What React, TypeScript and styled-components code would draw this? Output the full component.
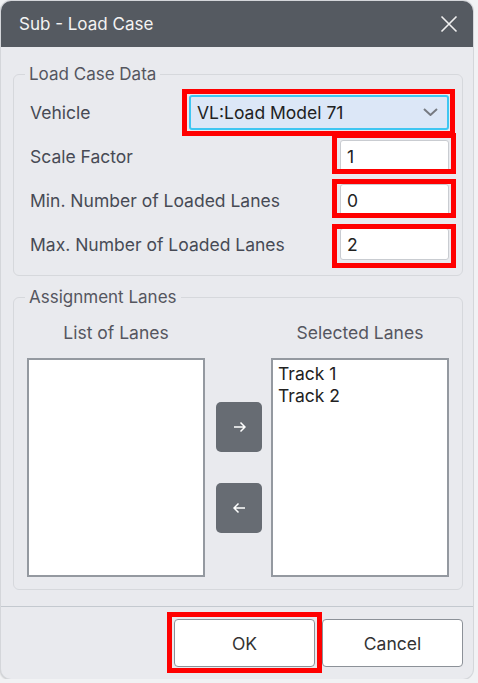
import { Fragment } from 'react';
import styled, { createGlobalStyle } from 'styled-components';

const GlobalStyle = createGlobalStyle`
  html, body {
    margin: 0;
    padding: 0;
    background: #f1f2f4;
  }
  body {
    font-family: Inter, "Noto Sans", sans-serif;
  }
`;

const Dialog = styled.div`
  width: 472px;
  margin: 1px 0 0 1px;
  display: flex;
  flex-direction: column;
  background: #e9eaee;
  border-radius: 10px;
  overflow: hidden;
  box-shadow: 0 0 0 1px #d4d6da, -1px 1px 2px rgba(0, 0, 0, 0.22);
`;

const TitleBar = styled.div`
  height: 46px;
  display: flex;
  align-items: center;
  justify-content: space-between;
  padding: 0 11px 0 18px;
  background: #555a61;
  color: #f3f3f3;
`;

const Title = styled.span`
  font-size: 17px;
`;

const CloseButton = styled.button`
  display: flex;
  align-items: center;
  justify-content: center;
  width: 26px;
  height: 26px;
  padding: 0;
  border: none;
  background: transparent;
  color: #f0f0f0;
  cursor: pointer;
`;

const Body = styled.div`
  padding: 16px 10px 16px 12px;
  display: flex;
  flex-direction: column;
  gap: 10px;
`;

const Group = styled.fieldset<{ $pad: string }>`
  margin: 0;
  min-width: 0;
  border: 1px solid #d6d8dc;
  border-radius: 6px;
  padding: ${({ $pad }) => $pad};
`;

const Legend = styled.legend<{ $shift: number }>`
  margin-left: ${({ $shift }) => $shift}px;
  padding: 0 4px;
  font-size: 17px;
  line-height: 22px;
  color: #55565f;
`;

const FormGrid = styled.div`
  display: grid;
  grid-template-columns: minmax(0, 1fr) auto;
  grid-auto-rows: 44px;
  align-items: center;
`;

const Label = styled.span`
  font-size: 17.5px;
  white-space: nowrap;
  color: #474a55;
`;

const Marked = styled.span<{ $inset: string }>`
  position: relative;
  display: inline-flex;
  justify-self: end;

  &::after {
    content: '';
    position: absolute;
    inset: ${({ $inset }) => $inset};
    border: 5px solid #ff0000;
    pointer-events: none;
  }
`;

const SelectBox = styled.div`
  box-sizing: border-box;
  width: 260px;
  height: 35px;
  display: flex;
  align-items: center;
  justify-content: space-between;
  padding: 0 9px 0 6px;
  background: #dce7f7;
  border: 2px solid #3ec6f2;
  border-radius: 3px;
  font-size: 17.5px;
  color: #222;
`;

const TextInput = styled.input`
  box-sizing: border-box;
  width: 109px;
  height: 32px;
  padding: 0 6px;
  background: #fff;
  border: 1.5px solid #c9ccd1;
  border-radius: 3px;
  font-family: inherit;
  font-size: 17.5px;
  color: #222;
  outline: none;
`;

const LanesGrid = styled.div`
  display: grid;
  grid-template-columns: 178px 1fr 178px;
  grid-template-rows: 22px 219px;
  row-gap: 14px;
`;

const ColumnTitle = styled.div`
  text-align: center;
  font-size: 17.5px;
  line-height: 22px;
  color: #55565f;
`;

const ListBox = styled.div`
  box-sizing: border-box;
  background: #fff;
  border: 2px solid #9499a0;
  padding: 3px 5px;
`;

const ListItem = styled.div`
  font-size: 17.5px;
  line-height: 22px;
  color: #222;
`;

const ArrowColumn = styled.div`
  display: flex;
  flex-direction: column;
  align-items: center;
  justify-content: center;
  gap: 31px;
  padding-left: 2px;
`;

const ArrowButton = styled.button`
  width: 46px;
  height: 50px;
  display: flex;
  align-items: center;
  justify-content: center;
  padding: 0;
  border: none;
  border-radius: 5px;
  background: #676c73;
  color: #fff;
  cursor: pointer;
`;

const Footer = styled.div`
  display: flex;
  justify-content: flex-end;
  align-items: center;
  gap: 7px;
  padding: 12px 10px 12px 0;
  border-top: 1.5px solid #c4c9cf;
`;

const DialogButton = styled.button`
  width: 141px;
  height: 48px;
  background: #fff;
  border: 1.5px solid #8c9198;
  border-radius: 4px;
  font-family: inherit;
  font-size: 17.5px;
  color: #333;
  cursor: pointer;
`;

function ArrowIcon({ dir }: { dir: 'left' | 'right' }) {
  const d = dir === 'right' ? 'M1 6h11M7.5 1.5 12 6l-4.5 4.5' : 'M12 6H1M5.5 1.5 1 6l4.5 4.5';
  return (
    <svg width="13" height="12" viewBox="0 0 13 12" fill="none" stroke="currentColor" strokeWidth="1.5">
      <path d={d} />
    </svg>
  );
}

const fields = [
  { label: 'Scale Factor', value: '1', inset: '-7px -7px -2px -8px' },
  { label: 'Min. Number of Loaded Lanes', value: '0', inset: '-5px -7px -2px -8px' },
  { label: 'Max. Number of Loaded Lanes', value: '2', inset: '-4px -7px -8px -8px' },
];

export default function App() {
  return (
    <>
      <GlobalStyle />
      <Dialog>
        <TitleBar>
          <Title>Sub - Load Case</Title>
          <CloseButton aria-label="Close">
            <svg width="18" height="18" viewBox="0 0 18 18" fill="none" stroke="currentColor" strokeWidth="1.6">
              <path d="M1.5 1.5l15 15M16.5 1.5l-15 15" />
            </svg>
          </CloseButton>
        </TitleBar>

        <Body>
          <Group $pad="5px 13px 9px 16px">
            <Legend $shift={-5}>Load Case Data</Legend>
            <FormGrid>
              <Label>Vehicle</Label>
              <Marked $inset="-6px -6px -6px -7px">
                <SelectBox>
                  <span>VL:Load Model 71</span>
                  <svg width="15" height="8" viewBox="0 0 15 8" fill="none" stroke="#777b82" strokeWidth="2">
                    <path d="M1 1l6.5 6L14 1" />
                  </svg>
                </SelectBox>
              </Marked>
              {fields.map((f) => (
                <Fragment key={f.label}>
                  <Label>{f.label}</Label>
                  <Marked $inset={f.inset}>
                    <TextInput defaultValue={f.value} />
                  </Marked>
                </Fragment>
              ))}
            </FormGrid>
          </Group>

          <Group $pad="14px 13px 12px 13px">
            <Legend $shift={-2}>Assignment Lanes</Legend>
            <LanesGrid>
              <ColumnTitle>List of Lanes</ColumnTitle>
              <div />
              <ColumnTitle>Selected Lanes</ColumnTitle>
              <ListBox />
              <ArrowColumn>
                <ArrowButton aria-label="Add">
                  <ArrowIcon dir="right" />
                </ArrowButton>
                <ArrowButton aria-label="Remove">
                  <ArrowIcon dir="left" />
                </ArrowButton>
              </ArrowColumn>
              <ListBox>
                <ListItem>Track 1</ListItem>
                <ListItem>Track 2</ListItem>
              </ListBox>
            </LanesGrid>
          </Group>
        </Body>

        <Footer>
          <Marked $inset="-7px -7px -6px -7px">
            <DialogButton>OK</DialogButton>
          </Marked>
          <DialogButton>Cancel</DialogButton>
        </Footer>
      </Dialog>
    </>
  );
}
